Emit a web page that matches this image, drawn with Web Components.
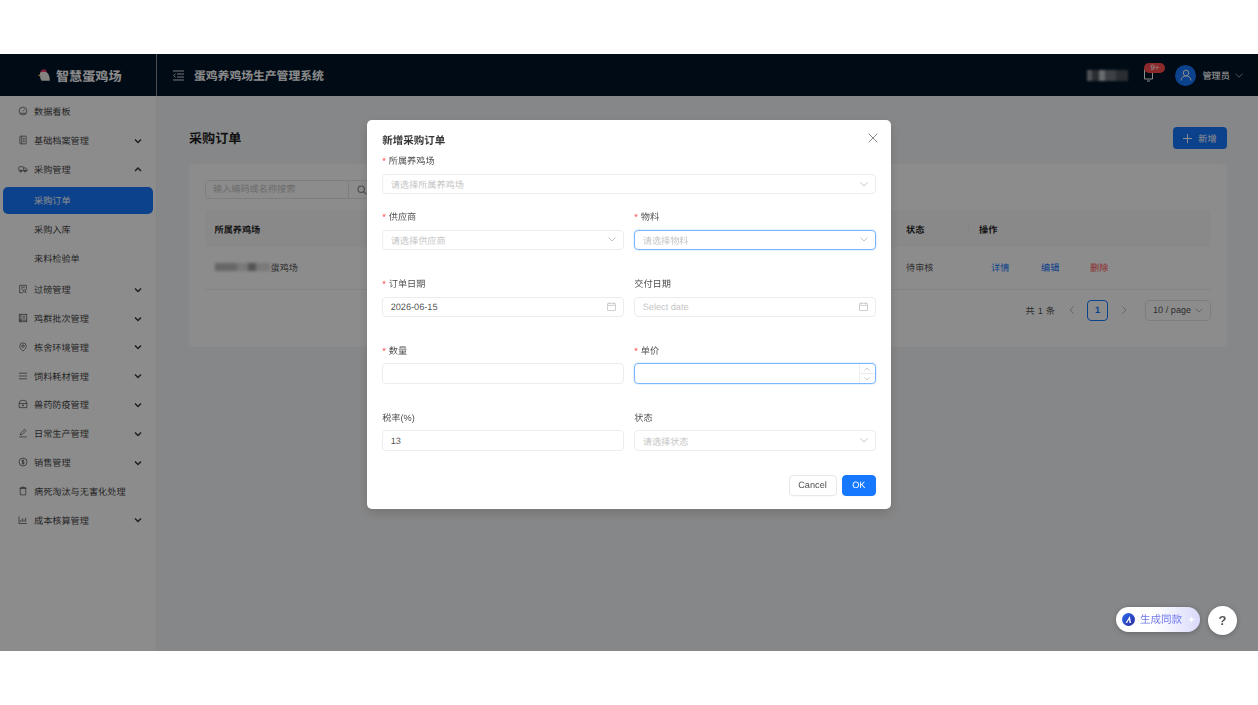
<!DOCTYPE html>
<html lang="zh-CN">
<head>
<meta charset="utf-8">
<title>采购订单</title>
<style>
  html, body { margin: 0; height: 705px; background: #fff; overflow: hidden; }
  body { font-family: "Liberation Sans", "Noto Sans CJK SC", sans-serif; }
</style>
</head>
<body>
<egg-app></egg-app>

<script>
const ICONS = {
    gauge: '<circle cx="8" cy="8" r="6.2"/><path d="M8 8.6 10.6 5.4M3.6 11.6h8.8"/>',
    book: '<rect x="3" y="1.8" width="10" height="12.4" rx=".6"/><path d="M6 1.8v12.4M7.8 5.4h3M7.8 8h3M7.8 10.6h3"/>',
    truck: '<rect x="1.2" y="4.4" width="7.8" height="6.4" rx="1"/><path d="M9 6.4h3.2l2.6 2.4v2H9"/><circle cx="4.4" cy="11.4" r="1.6"/><circle cx="11.4" cy="11.4" r="1.6"/>',
    scale: '<path d="M8 14H2.6V2h10.8v6.6"/><path d="M5 5h6M5 8h3"/><circle cx="10.6" cy="11" r="2"/><path d="m12 12.6 1.8 1.6"/>',
    flock: '<rect x="2" y="2" width="12" height="12"/><path d="M4.6 2v12M2 11.4h12M7 5h4.6M7 8h4.6"/>',
    pin: '<path d="M8 14.6C5 11.8 2.8 9.4 2.8 6.6a5.2 5.2 0 0 1 10.4 0c0 2.8-2.2 5.2-5.2 8Z"/><circle cx="8" cy="6.6" r="2"/>',
    bars: '<path d="M1.5 3.5h13M1.5 8h13M1.5 12.5h13"/>',
    medic: '<path d="M1.8 13.8V6.4a4.8 4.2 0 0 1 4.8-4.2h2.8a4.8 4.2 0 0 1 4.8 4.2v7.4Z"/><path d="M1.8 7.2h12.4M8 8.6v3M6.5 10.1h3"/>',
    edit: '<path d="M2 14.3h12M3.6 11.2l.6-2.8 6.4-6.4 2.2 2.2-6.4 6.4Z"/>',
    dollar: '<circle cx="8" cy="8" r="6.4"/><path d="M10 5.9C9.4 5 6 4.7 6 6.5c0 2 4.1 1 4.1 3.1 0 1.8-3.4 1.5-4.2.5M8 3.9v8.2"/>',
    trash: '<path d="M3.6 3.4h8.8V14.2H3.6ZM2.2 3.4h11.6M6 3.4V1.8h4v1.6"/>',
    chart: '<path d="M1.6 2.4v11.2h12.8M4.4 11V8M7 11V5.4M9.6 11V7M12.2 11V4.4"/>'
};

function svgIcon(name, size) {
    return `<svg width="${size}" height="${size}" viewBox="0 0 16 16" fill="none" stroke="currentColor" stroke-width="1.2">${ICONS[name]}</svg>`;
}

class EggApp extends HTMLElement {
    connectedCallback() {
        const shadowRoot = this.attachShadow({ mode: 'open' });
        shadowRoot.innerHTML = `
            <style>
                :host {
                    display: block;
                    margin-top: 54px;
                    height: 597px;
                    position: relative;
                    overflow: hidden;
                    filter: blur(.35px);
                    font-family: "Liberation Sans", "Noto Sans CJK SC", sans-serif;
                    text-rendering: geometricPrecision;
                    background: #f5f6f8;
                }
                .body { display: flex; height: 555px; }
                .mask {
                    position: absolute;
                    inset: 0;
                    background: rgba(0, 0, 0, .45);
                    backdrop-filter: blur(.6px);
                    display: flex;
                    justify-content: center;
                    align-items: flex-start;
                    padding-top: 66px;
                }
            </style>
            <egg-header></egg-header>
            <div class="body">
                <egg-sidebar></egg-sidebar>
                <order-list></order-list>
            </div>
            <div class="mask"><order-modal></order-modal></div>
            <float-actions></float-actions>
        `;
    }
}
customElements.define("egg-app", EggApp);

class EggHeader extends HTMLElement {
    connectedCallback() {
        const shadowRoot = this.attachShadow({ mode: 'open' });
        shadowRoot.innerHTML = `
            <style>
                :host {
                    display: flex;
                    align-items: center;
                    height: 42px;
                    background: #001529;
                    color: #fff;
                }
                .logo {
                    width: 157px;
                    height: 100%;
                    box-sizing: border-box;
                    border-right: 1px solid #8a8f96;
                    display: flex;
                    align-items: center;
                    justify-content: center;
                    gap: 5px;
                    font-size: 13.1px;
                    font-weight: 700;
                    padding-left: 2.5px;
                }
                .fold { margin-left: 16px; color: #ddd; display: flex; }
                .title { margin-left: 10px; font-size: 11.8px; font-weight: 700; flex: 1; }
                .redact {
                    width: 41px;
                    height: 11px;
                    margin-right: 15px;
                    filter: blur(1.2px);
                    background: linear-gradient(90deg, #8f959c 0 12%, #4d545c 12% 30%, #bfc3c8 30% 45%, #6f767e 45% 70%, #4d545c 70% 100%);
                }
                .bell { position: relative; width: 22px; height: 22px; margin-right: 10px; color: #fff; display: flex; align-items: center; padding-left: 1px; box-sizing: border-box; }
                .badge {
                    position: absolute;
                    left: 1px;
                    top: -1px;
                    width: 21px;
                    height: 10px;
                    border-radius: 5px;
                    background: #ff4d4f;
                    color: #fff;
                    font-size: 7.8px;
                    line-height: 10px;
                    text-align: center;
                }
                .avatar {
                    width: 21px;
                    height: 21px;
                    border-radius: 50%;
                    background: #1677ff;
                    display: flex;
                    align-items: center;
                    justify-content: center;
                    margin-right: 6px;
                }
                .user { font-size: 9.2px; font-weight: 500; }
                .caret { margin: 0 15px 0 5px; display: flex; color: #999; }
            </style>
            <div class="logo">
                <svg width="14" height="14" viewBox="0 0 14 14">
                    <path d="M3 4.6C4.600 3 7.400 2.800 9.400 4c2.400 1.500 3.400 4.600 3.400 8.800H4.600C3.400 11 3 9 3 7.400Z" fill="#f1eeec"/>
                    <path d="M3.200 4.800C3.400 3.200 4 2.300 5 2.300c.4-.9 1.400-1.300 2.200-.8.800-.3 1.700.1 2.100 1.100l.3 1.600C7.500 3.300 5 3.500 3.200 4.800Z" fill="#f0386b"/>
                    <path d="M3.100 6 .9 7.600l2.300.8Z" fill="#f5c04a"/>
                </svg>
                <span>智慧蛋鸡场</span>
            </div>
            <span class="fold">
                <svg width="11" height="11" viewBox="0 0 11 11" fill="none" stroke="currentColor" stroke-width="1"><path d="M0 1h11M4 4h7M4 7h7M0 10h11M2.500 3.800.6 5.500l1.900 1.700"/></svg>
            </span>
            <span class="title">蛋鸡养鸡场生产管理系统</span>
            <div class="redact"></div>
            <div class="bell">
                <svg width="9" height="13" viewBox="0 0 9 13" fill="none" stroke="currentColor" stroke-width="1"><path d="M.5.5h8v9.500h-8ZM3 12h3"/></svg>
                <span class="badge">9+</span>
            </div>
            <span class="avatar">
                <svg width="12" height="12" viewBox="0 0 12 12" fill="none" stroke="#fff" stroke-width="1"><circle cx="6" cy="4" r="2.800"/><path d="M1 11.500c.3-3 2.300-4.600 5-4.600s4.700 1.600 5 4.600"/></svg>
            </span>
            <span class="user">管理员</span>
            <span class="caret">
                <svg width="8" height="5" viewBox="0 0 8 5" fill="none" stroke="currentColor" stroke-width="1"><path d="m.5.800 3.500 3.400L7.500.800"/></svg>
            </span>
        `;
    }
}
customElements.define("egg-header", EggHeader);

class SideItem extends HTMLElement {
    connectedCallback() {
        const shadowRoot = this.attachShadow({ mode: 'open' });
        const icon = this.getAttribute('icon');
        const arrow = this.getAttribute('arrow');
        const chevron = arrow === 'up' ? 'M1 5 4 2l3 3' : 'M1 2.500l3 3 3-3';
        shadowRoot.innerHTML = `
            <style>
                :host {
                    display: flex;
                    align-items: center;
                    height: 26.2px;
                    margin: 0 3px;
                    padding-left: 15px;
                    padding-right: 11px;
                    border-radius: 5px;
                    font-size: 9.17px;
                    color: rgba(0, 0, 0, .78);
                }
                :host([child]) { padding-left: 31px; }
                :host([active]) { background: #1677ff; color: #fff; }
                .icon { width: 10px; height: 10px; margin-right: 6px; display: flex; opacity: .85; }
                .label { flex: 1; }
                .arrow { display: flex; }
            </style>
            ${icon ? `<span class="icon">${svgIcon(icon, 10)}</span>` : ''}
            <span class="label"><slot></slot></span>
            ${arrow ? `<span class="arrow"><svg width="8" height="7" viewBox="0 0 8 7" fill="none" stroke="currentColor" stroke-width="1.5">
                <path d="${chevron}"/></svg></span>` : ''}
        `;
    }
}
customElements.define("side-item", SideItem);

class EggSidebar extends HTMLElement {
    connectedCallback() {
        const shadowRoot = this.attachShadow({ mode: 'open' });
        shadowRoot.innerHTML = `
            <style>
                :host {
                    display: flex;
                    flex-direction: column;
                    gap: 2.6px;
                    width: 157px;
                    flex: none;
                    box-sizing: border-box;
                    padding-top: 2.4px;
                    background: #fff;
                    border-right: 1px solid #eef0f2;
                }
                .sub { display: flex; flex-direction: column; gap: 2.6px; margin: 2.6px 0; }
            </style>
            <side-item icon="gauge">数据看板</side-item>
            <side-item icon="book" arrow="down">基础档案管理</side-item>
            <side-item icon="truck" arrow="up">采购管理</side-item>
            <div class="sub">
                <side-item child active>采购订单</side-item>
                <side-item child>采购入库</side-item>
                <side-item child>来料检验单</side-item>
            </div>
            <side-item icon="scale" arrow="down">过磅管理</side-item>
            <side-item icon="flock" arrow="down">鸡群批次管理</side-item>
            <side-item icon="pin" arrow="down">栋舍环境管理</side-item>
            <side-item icon="bars" arrow="down">饲料耗材管理</side-item>
            <side-item icon="medic" arrow="down">兽药防疫管理</side-item>
            <side-item icon="edit" arrow="down">日常生产管理</side-item>
            <side-item icon="dollar" arrow="down">销售管理</side-item>
            <side-item icon="trash">病死淘汰与无害化处理</side-item>
            <side-item icon="chart" arrow="down">成本核算管理</side-item>
        `;
    }
}
customElements.define("egg-sidebar", EggSidebar);

class OrderList extends HTMLElement {
    connectedCallback() {
        const shadowRoot = this.attachShadow({ mode: 'open' });
        shadowRoot.innerHTML = `
            <style>
                :host {
                    display: block;
                    flex: 1;
                    box-sizing: border-box;
                    padding: 31px 31px 0 32px;
                    font-size: 9.17px;
                    color: rgba(0, 0, 0, .72);
                }
                .top { display: flex; justify-content: space-between; align-items: center; height: 22px; margin-bottom: 15px; }
                h2 { margin: -1.5px 0 0; font-size: 13.1px; font-weight: 700; color: rgba(0, 0, 0, .88); }
                .add {
                    display: flex;
                    align-items: center;
                    justify-content: center;
                    gap: 6px;
                    width: 54px;
                    height: 22px;
                    border-radius: 4px;
                    background: #1677ff;
                    color: #fff;
                }
                .card { background: #fff; border-radius: 5px; padding: 16px; height: 183px; box-sizing: border-box; }
                .search { display: flex; width: 170px; height: 19px; margin-bottom: 11px; }
                .search .box {
                    width: 144px;
                    box-sizing: border-box;
                    border: 1px solid #e6e6e6;
                    border-radius: 4px 0 0 4px;
                    padding-left: 7px;
                    line-height: 17px;
                    color: #c6c6c6;
                }
                .search .btn { flex: 1; border: 1px solid #e6e6e6; border-left: 0; display: flex; align-items: center; justify-content: center; color: #888; }
                .row { display: flex; align-items: center; padding-left: 9.5px; }
                .head { height: 37px; background: #fafafa; font-weight: 700; color: rgba(0, 0, 0, .88); }
                .data { height: 43px; padding-bottom: 1.5px; box-sizing: border-box; border-bottom: 1px solid #f0f0f0; }
                .name { flex: 1; display: flex; align-items: center; }
                .redact {
                    width: 55px;
                    height: 8px;
                    margin-right: 1px;
                    filter: blur(1.5px);
                    background: linear-gradient(90deg, #bbb 0 40%, #ddd 40% 60%, #999 60% 75%, #ddd 75% 100%);
                }
                .status { width: 73px; }
                .ops { width: 232px; display: flex; position: relative; }
                .head .ops::before { content: ""; position: absolute; left: -11px; top: 0; height: 12px; width: 1px; background: #f0f0f0; }
                .data .ops span { position: absolute; top: -7px; }
                .link { color: #1677ff; }
                .danger { color: #ff4d4f; }
                .pager { display: flex; align-items: center; justify-content: flex-end; margin-top: 9.5px; height: 21px; }
                .pager .total { margin-right: 8px; word-spacing: .5px; }
                .arrow { width: 16px; display: flex; justify-content: center; color: #bbb; }
                .pager .cur {
                    width: 21px;
                    height: 21px;
                    box-sizing: border-box;
                    border: 1px solid #1677ff;
                    border-radius: 4px;
                    color: #1677ff;
                    font-weight: 600;
                    text-align: center;
                    line-height: 19px;
                    margin: 0 8px;
                }
                .size {
                    width: 66px;
                    height: 21px;
                    box-sizing: border-box;
                    margin-left: 13px;
                    border: 1px solid #e6e6e6;
                    border-radius: 4px;
                    display: flex;
                    align-items: center;
                    justify-content: space-between;
                    padding: 0 7px;
                }
            </style>
            <div class="top">
                <h2>采购订单</h2>
                <div class="add">
                    <svg width="9" height="9" viewBox="0 0 9 9" stroke="#fff" stroke-width="1"><path d="M4.500 0v9M0 4.500h9"/></svg>
                    <span>新增</span>
                </div>
            </div>
            <div class="card">
                <div class="search">
                    <div class="box">输入编码或名称搜索</div>
                    <div class="btn"><svg width="10" height="10" viewBox="0 0 10 10" fill="none" stroke="currentColor" stroke-width="1.100"><circle cx="4.200" cy="4.200" r="3.200"/><path d="m6.600 6.600 2.800 2.800"/></svg></div>
                </div>
                <div class="row head">
                    <span class="name">所属养鸡场</span>
                    <span class="status">状态</span>
                    <span class="ops">操作</span>
                </div>
                <div class="row data">
                    <span class="name"><span class="redact"></span>蛋鸡场</span>
                    <span class="status">待审核</span>
                    <span class="ops">
                        <span class="link" style="left:12px">详情</span>
                        <span class="link" style="left:62px">编辑</span>
                        <span class="danger" style="left:111px">删除</span>
                    </span>
                </div>
                <div class="pager">
                    <span class="total">共 1 条</span>
                    <span class="arrow"><svg width="5" height="8" viewBox="0 0 5 8" fill="none" stroke="currentColor"><path d="M4.500.5 1 4l3.500 3.500"/></svg></span>
                    <span class="cur">1</span>
                    <span class="arrow"><svg width="5" height="8" viewBox="0 0 5 8" fill="none" stroke="currentColor"><path d="M.5.5 4 4 .5 7.500"/></svg></span>
                    <span class="size">10 / page
                        <svg width="8" height="5" viewBox="0 0 8 5" fill="none" stroke="#bbb"><path d="m.5.500 3.500 3.500L7.500.500"/></svg>
                    </span>
                </div>
            </div>
        `;
    }
}
customElements.define("order-list", OrderList);

class FormField extends HTMLElement {
    connectedCallback() {
        const shadowRoot = this.attachShadow({ mode: 'open' });
        const type = this.getAttribute('type') || 'text';
        const placeholder = this.getAttribute('placeholder') || '';
        const value = this.getAttribute('value') || '';
        let suffix = '';
        if (type === 'select') {
            suffix = '<svg class="end" width="8" height="5" viewBox="0 0 8 5" fill="none" stroke="#c4c4c4"><path d="m.5.500 3.500 3.500L7.500.500"/></svg>';
        } else if (type === 'date') {
            suffix = '<svg class="end" width="9" height="9" viewBox="0 0 9 9" fill="none" stroke="#c4c4c4" stroke-width=".8"><rect x=".5" y="1.400" width="8" height="7.100" rx=".4"/><path d="M.5 3.400h8M2.500.3v2M6.500.3v2"/></svg>';
        } else if (type === 'number') {
            suffix = `<span class="spin">
                <span><svg width="6" height="4" viewBox="0 0 6 4" fill="none" stroke="#bfbfbf" stroke-width=".8"><path d="M.5 3.500 3 1l2.500 2.500"/></svg></span>
                <span><svg width="6" height="4" viewBox="0 0 6 4" fill="none" stroke="#bfbfbf" stroke-width=".8"><path d="M.5.500 3 3 5.500.500"/></svg></span>
            </span>`;
        }
        shadowRoot.innerHTML = `
            <style>
                :host { display: block; font-size: 9.17px; color: rgba(0, 0, 0, .72); }
                label { display: block; height: 15px; line-height: 16.5px; margin-bottom: 5.4px; }
                .req { color: #ff4d4f; margin-right: 3px; }
                .box {
                    position: relative;
                    display: flex;
                    align-items: center;
                    height: 20.9px;
                    box-sizing: border-box;
                    padding: 0 7.5px;
                    border: 1px solid #ececec;
                    border-radius: 4px;
                    background: #fff;
                }
                :host([focused]) .box { border-color: #7fb5ff; box-shadow: 0 0 0 1px rgba(5, 145, 255, .1); }
                .val { flex: 1; }
                .val.ph { color: #c6c6c6; }
                .end { flex: none; margin-right: -.5px; }
                .spin {
                    position: absolute;
                    right: 0;
                    top: 0;
                    bottom: 0;
                    width: 15px;
                    border-left: 1px solid #eee;
                    display: flex;
                    flex-direction: column;
                }
                .spin span { flex: 1; display: flex; align-items: center; justify-content: center; }
                .spin span + span { border-top: 1px solid #eee; }
            </style>
            <label>${this.hasAttribute('required') ? '<span class="req">*</span>' : ''}${this.getAttribute('label')}</label>
            <div class="box">
                <span class="val ${value ? '' : 'ph'}">${value || placeholder}</span>
                ${suffix}
            </div>
        `;
    }
}
customElements.define("form-field", FormField);

class OrderModal extends HTMLElement {
    connectedCallback() {
        const shadowRoot = this.attachShadow({ mode: 'open' });
        shadowRoot.innerHTML = `
            <style>
                :host {
                    display: block;
                    position: relative;
                    width: 524px;
                    height: 389px;
                    box-sizing: border-box;
                    padding: 13.5px 15.2px 0;
                    background: #fff;
                    border-radius: 5px;
                    box-shadow: 0 4px 12px rgba(0, 0, 0, .15);
                    font-size: 9.17px;
                    color: rgba(0, 0, 0, .72);
                }
                .title { font-size: 10.5px; font-weight: 700; line-height: 15px; margin-bottom: 4.7px; color: rgba(0, 0, 0, .8); }
                .close { position: absolute; right: 13px; top: 13px; width: 10px; height: 10px; color: #888; }
                .first { margin-bottom: 14.7px; }
                .grid { display: grid; grid-template-columns: 1fr 1fr; column-gap: 10.5px; row-gap: 25.7px; }
                .foot { display: flex; justify-content: flex-end; gap: 5.3px; margin-top: 23.5px; }
                .btn {
                    height: 21px;
                    line-height: 19px;
                    box-sizing: border-box;
                    border: 1px solid #e8e8e8;
                    border-radius: 4px;
                    text-align: center;
                    width: 48px;
                    box-shadow: 0 1px 0 rgba(0, 0, 0, .02);
                }
                .ok { width: 34px; background: #1677ff; border-color: #1677ff; color: #fff; }
            </style>
            <svg class="close" viewBox="0 0 10 10" fill="none" stroke="currentColor" stroke-width="1"><path d="m.7.700 8.600 8.600M9.300.700.7 9.300"/></svg>
            <div class="title">新增采购订单</div>
            <form-field class="first" required label="所属养鸡场" type="select" placeholder="请选择所属养鸡场"></form-field>
            <div class="grid">
                <form-field required label="供应商" type="select" placeholder="请选择供应商"></form-field>
                <form-field required focused label="物料" type="select" placeholder="请选择物料"></form-field>
                <form-field required label="订单日期" type="date" value="2026-06-15"></form-field>
                <form-field label="交付日期" type="date" placeholder="Select date"></form-field>
                <form-field required label="数量"></form-field>
                <form-field required focused label="单价" type="number"></form-field>
                <form-field label="税率(%)" value="13"></form-field>
                <form-field label="状态" type="select" placeholder="请选择状态"></form-field>
            </div>
            <div class="foot">
                <div class="btn">Cancel</div>
                <div class="btn ok">OK</div>
            </div>
        `;
    }
}
customElements.define("order-modal", OrderModal);

class FloatActions extends HTMLElement {
    connectedCallback() {
        const shadowRoot = this.attachShadow({ mode: 'open' });
        shadowRoot.innerHTML = `
            <style>
                :host {
                    position: absolute;
                    right: 21px;
                    top: 552px;
                    display: flex;
                    align-items: center;
                    gap: 8px;
                }
                .pill {
                    display: flex;
                    align-items: center;
                    gap: 5px;
                    width: 84px;
                    height: 25px;
                    margin-bottom: 3px;
                    box-sizing: border-box;
                    padding-left: 6px;
                    border-radius: 13px;
                    background: linear-gradient(90deg, #fff 45%, #d9d9fb 100%);
                    box-shadow: 0 1px 5px rgba(0, 0, 0, .25);
                    color: #6f78ee;
                    font-size: 10.5px;
                    white-space: nowrap;
                }
                .mark { width: 13px; height: 13px; flex: none; }
                .spark { margin-left: 1px; flex: none; }
                .help {
                    width: 29px;
                    height: 29px;
                    border-radius: 50%;
                    background: #fff;
                    box-shadow: 0 1px 5px rgba(0, 0, 0, .25);
                    color: #555;
                    font-size: 13px;
                    font-weight: 700;
                    line-height: 29px;
                    text-align: center;
                }
            </style>
            <div class="pill">
                <svg class="mark" viewBox="0 0 13 13">
                    <defs><linearGradient id="g" x1="0" y1="0" x2="1" y2="1"><stop offset="0" stop-color="#2b6cf0"/><stop offset="1" stop-color="#2a2a9c"/></linearGradient></defs>
                    <circle cx="6.500" cy="6.500" r="6.500" fill="url(#g)"/>
                    <path d="M7.800 3 9 10H7.600L7 6.400 5 10H3.600Z" fill="#fff"/>
                </svg>
                <span>生成同款</span>
                <svg class="spark" width="7" height="7" viewBox="0 0 8 8"><path d="M4 0c.3 2.400 1.400 3.600 4 4-2.600.4-3.700 1.600-4 4-.3-2.400-1.400-3.600-4-4 2.600-.4 3.700-1.600 4-4Z" fill="#fff"/></svg>
            </div>
            <div class="help">?</div>
        `;
    }
}
customElements.define("float-actions", FloatActions);
</script>
</body>
</html>
